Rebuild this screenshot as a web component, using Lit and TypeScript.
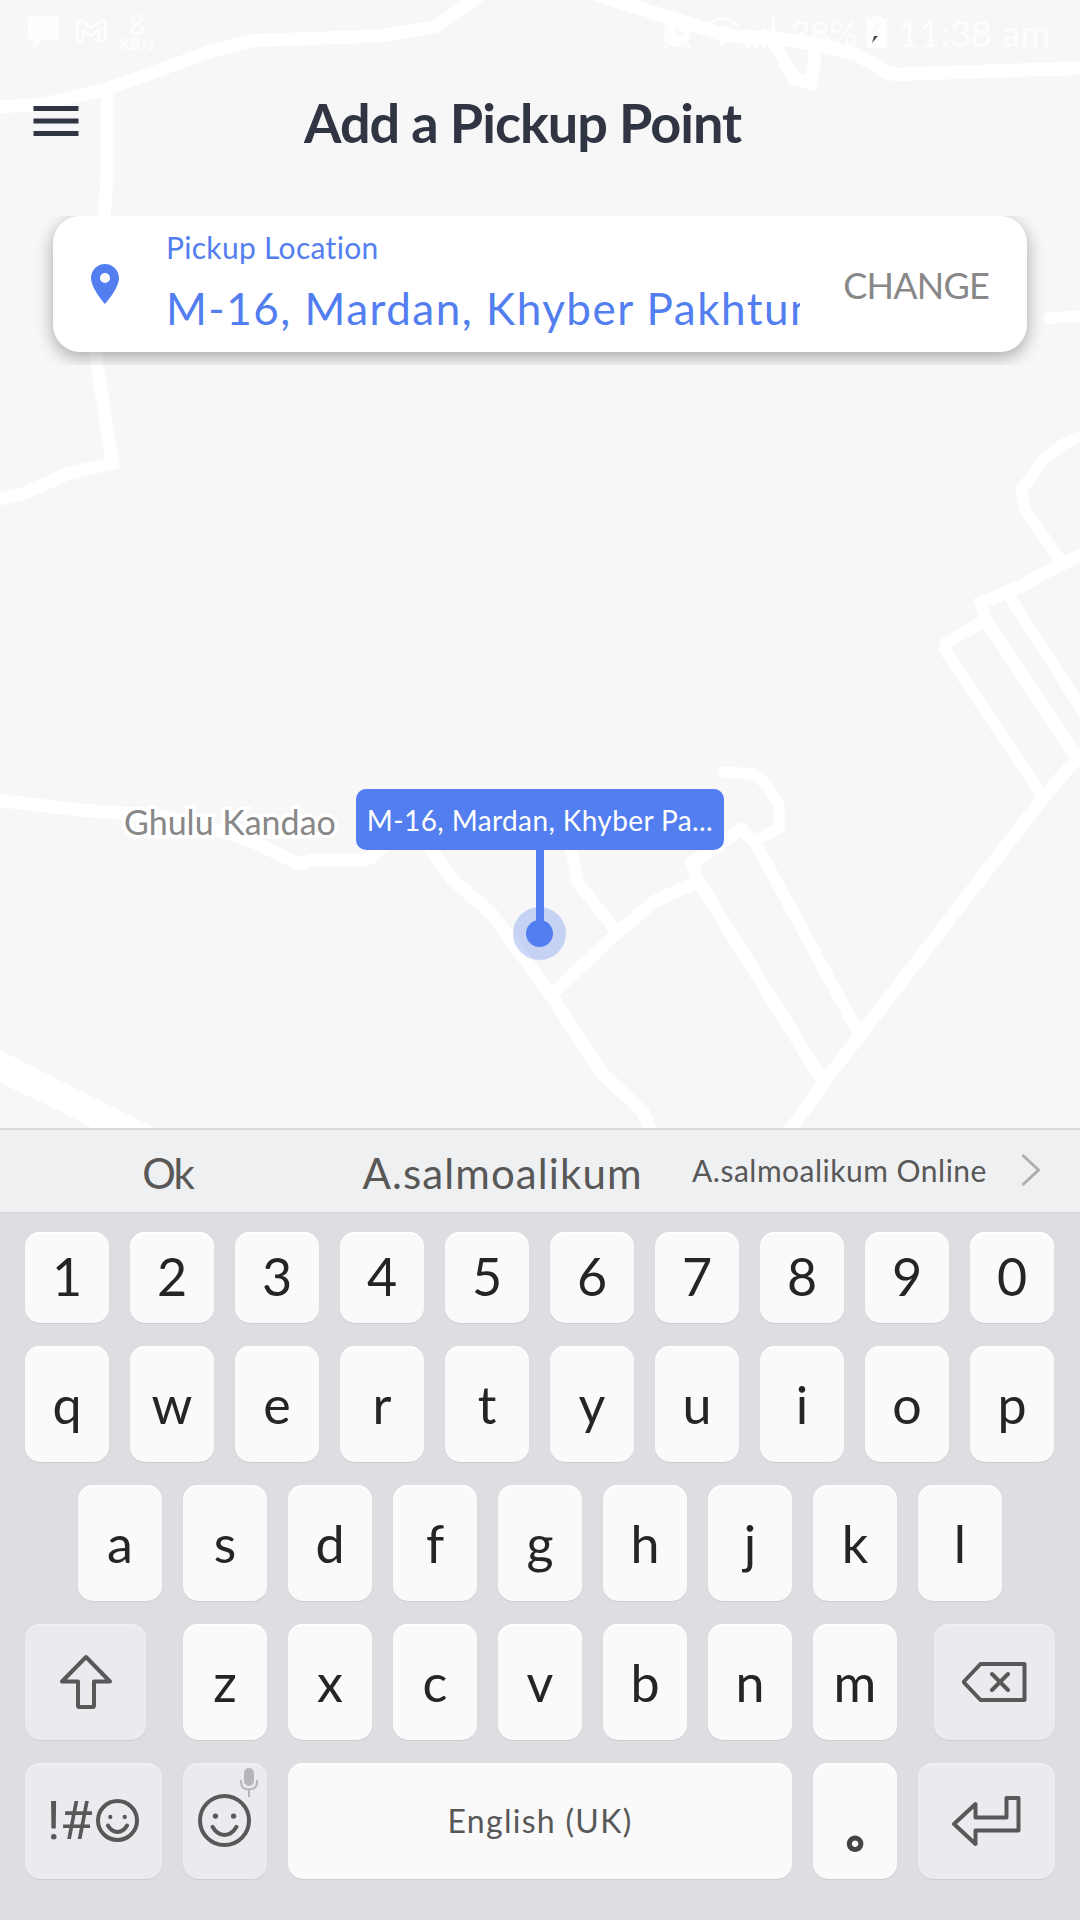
import { LitElement, html, css, svg } from "lit";
import { customElement, property } from "lit/decorators.js";

const ROADS: Array<[number, string]> = [
  [13, "M-5 107 L41 104.5 L107 89 L212 51 L253 40.5 L380 36 L437 26 L484 -8"],
  [13, "M107 89 V180 L104 217 L96 310 L95 352 L112.500 463 L67 474 L22.500 494 L-5 500"],
  [13.500, "M588 -8 L728 36 L774 38 L815 44 L858 55 L886 72 L895 74.500 L1085 68"],
  [13, "M774 42 L794 79 L811 83 L816 46"],
  [11.500, "M1049 318 L1085 316"],
  [11.500, "M1085 435 L1065 443 L1046 457 L1021 490 L1026 511 L1061 561"],
  [13, "M1085 554 L1062 564 L1019 587 L981 603 L986 620 L1075 755"],
  [12, "M984 621 L946 643 L945 650 L1043 797"],
  [11.500, "M1010 597 L1084 713"],
  [13, "M1086 748 L1043 798 L824 1082 L786 1136"],
  [11.500, "M724 772 L754 774 L767 785 L779 806 V828 L754 841"],
  [13, "M741 829 L692 863 L697 879 L824 1083"],
  [12, "M741 829 L755 842 L859 1034"],
  [13, "M697 882 L655 901 L618 932 L553 993"],
  [12, "M565 835 L572 853 L578 883 L617 932"],
  [13, "M410 820 L430 848 L454 881 L491 913 L553 998 L602 1073 L643 1112 L653 1138"],
  [13, "M-5 800 L80 810 L160 816 L210 828 L252 841 L299 864 L312 860 H362 L372 857 L400 830"],
];

@customElement("map-roads")
export class MapRoads extends LitElement {
  static styles = css`
    :host { display: block; }
    .roads { display: block; fill: none; stroke: #fff; stroke-linecap: round; stroke-linejoin: miter; }
    .highway { fill: #fff; stroke: none; }
  `;
  render() {
    return html`<svg class="roads" width="1080" height="1128" viewBox="0 0 1080 1128">
      ${ROADS.map(([w, d]) => svg`<path stroke-width=${w} d=${d}></path>`)}
      <path class="highway" d="M0 1050 L119 1110 L155 1128 H92 L58 1110 L0 1083 Z" />
    </svg>`;
  }
}

@customElement("status-bar")
export class StatusBar extends LitElement {
  static styles = css`
    :host {
      display: flex; justify-content: space-between; height: 62px; padding: 12px 31px 0 28px;
      box-sizing: border-box; color: rgba(255, 255, 255, 0.8);
    }
    .group { display: flex; align-items: flex-start; }
    .chat { margin-top: 4px; }
    .mail { margin: 7px 12px 0 15px; }
    .rate { display: flex; flex-direction: column; align-items: center; font: 700 16px/15px "Open Sans", sans-serif; }
    .num { font-size: 28px; line-height: 25px; font-weight: 600; }
    .alarm { margin: 6px 12px 0 0; }
    .wifi { margin: 5px 5px 0 0; }
    .signal { margin: 5px 14px 0 0; }
    .txt { font: 400 36px/42px Lato, sans-serif; white-space: nowrap; }
    .pct { width: 69px; letter-spacing: -1.3px; }
    .batt { margin: 4px 11px 0 7px; }
    .time { width: 151px; letter-spacing: 0.4px; }
  `;
  render() {
    return html`
      <div class="group">
        <svg class="chat" width="32" height="33" fill="currentColor"><path d="M2 0H29Q31 0 31 2V22Q31 24 29 24H14L5 33V24H2Q0 24 0 22V2Q0 0 2 0Z" /></svg>
        <svg class="mail" width="32" height="25" fill="none" stroke="currentColor" stroke-width="2.500" stroke-linejoin="round">
          <path d="M2 4Q4 0 7 2L16 9L25 2Q29 0 30 4V20Q30 22 28 22H24V11L16 17L8 11V22H4Q2 22 2 20Z" />
        </svg>
        <div class="rate"><span class="num">8</span><span>KB/s</span></div>
      </div>
      <div class="group">
        <svg class="alarm" width="30" height="32" fill="none" stroke="currentColor" stroke-width="3">
          <path fill="currentColor" stroke="none" fill-rule="evenodd" d="M15 2A13.500 13.500 0 1 0 15 29A13.500 13.500 0 1 0 15 2ZM13.500 7H16.500V14H22V17H13.500Z" />
          <path d="M6 26L2 30M24 26L28 30M2 7L7 2M23 2L28 7" />
        </svg>
        <svg class="wifi" width="36" height="30" fill="none" stroke="currentColor" stroke-width="3">
          <path d="M2 9Q18 -6 34 9M8 15Q18 5 28 15M13 21Q18 16 23 21" /><circle cx="18" cy="26" r="2.500" fill="currentColor" stroke="none" />
        </svg>
        <svg class="signal" width="31" height="31" fill="currentColor"><path d="M0 27h5v4H0zM9 21h4v10H9zM18 11h3v20h-3zM27 0h3v31h-3z" /></svg>
        <span class="txt pct">38%</span>
        <svg class="batt" width="21" height="32" viewBox="0 0 21 32">
          <path fill="currentColor" d="M6 0h9v3h6v29H0V3h6z" />
          <path fill="#f9f9f9" d="M11 7L4 18H9L6 27L17 15H11L15 7Z" />
          <path fill="#4a4a4a" d="M8 20H12L6 27Z" />
        </svg>
        <span class="txt time">11:38 am</span>
      </div>`;
  }
}

@customElement("pickup-card")
export class PickupCard extends LitElement {
  static styles = css`
    :host {
      display: flex; height: 136px; margin: 0 53px; box-sizing: border-box; padding: 0 38px 0 28px;
      border-radius: 27px; background: #fff; font-family: Lato, sans-serif;
      box-shadow: 0 5px 17px rgba(0, 0, 0, 0.33); clip-path: inset(0 -40px -13px -40px);
    }
    .pin { flex: none; align-self: center; margin-top: -1px; fill: #527ef0; }
    .body { width: 634px; margin-left: 37px; padding-top: 13px; overflow: hidden; color: #527ef0; white-space: nowrap; }
    .label { font-size: 30px; line-height: 36px; letter-spacing: 0.3px; }
    .value { font-size: 44px; line-height: 52px; margin-top: 17px; letter-spacing: 1.5px; }
    .change { margin-left: auto; align-self: center; font-size: 36px; line-height: 44px; letter-spacing: -0.8px; margin-top: 2px; color: #888; }
  `;
  render() {
    return html`
      <svg class="pin" width="48" height="48" viewBox="0 0 24 24"><path d="M12 2C8.130 2 5 5.130 5 9c0 5.250 7 13 7 13s7-7.750 7-13c0-3.870-3.130-7-7-7zm0 9.500a2.500 2.500 0 1 1 0-5 2.500 2.500 0 0 1 0 5z" /></svg>
      <div class="body">
        <div class="label">Pickup Location</div>
        <div class="value">M-16, Mardan, Khyber Pakhtun</div>
      </div>
      <div class="change">CHANGE</div>`;
  }
}

const smile = (r: number, w: number) => svg`
  <g transform="translate(${r + w / 2} ${r + w / 2})" fill="none" stroke="#585858" stroke-width=${w} stroke-linecap="round">
    <circle r=${r}></circle>
    <path d="M${-r * 0.49} ${r * 0.26}Q${-r * 0.3} ${r * 0.59} 0 ${r * 0.59}T${r * 0.49} ${r * 0.26}"></path>
    <circle cx=${-r * 0.37} cy=${-r * 0.18} r=${r * 0.11} fill="#585858" stroke="none"></circle>
    <circle cx=${r * 0.37} cy=${-r * 0.18} r=${r * 0.11} fill="#585858" stroke="none"></circle>
  </g>`;

@customElement("key-cap")
export class KeyCap extends LitElement {
  @property() label = "";
  static styles = css`
    :host {
      display: flex; align-items: center; justify-content: center; position: relative;
      box-sizing: border-box; width: 84px; height: 100%; border-radius: 15px; background: #fafafa;
      box-shadow: inset 0 2px 1px #fff, 0 1px 1px rgba(0, 0, 0, 0.08);
      font: 400 52px/62px Lato, sans-serif; color: #252525;
    }
    :host([fn]) { background: #e9ebef; box-shadow: inset 0 2px 1px #eff0f3, 0 1px 1px rgba(0, 0, 0, 0.08); color: #585858; }
    :host([wide]) { width: 121px; }
    :host([wider]) { width: 137px; }
    :host([space]) { width: 504px; font-size: 32px; line-height: 38px; color: #585858; }
  `;
  render() {
    return html`<slot>${this.label}</slot>`;
  }
}

@customElement("soft-keyboard")
export class SoftKeyboard extends LitElement {
  static styles = css`
    :host { display: block; }
    .suggest {
      display: grid; grid-template-columns: 335px 335px 339px 71px; align-items: center; height: 82px;
      background: #eff0f2; border-top: 2px solid #d9dadb;
      font: 400 42px/50px Lato, sans-serif; color: #585858; text-align: center; white-space: nowrap;
    }
    .first { letter-spacing: -2px; padding-top: 3px; }
    .mid { letter-spacing: 1.1px; padding-top: 3px; }
    .small { font-size: 30px; letter-spacing: 0.5px; padding-bottom: 3px; }
    .more { padding-left: 12px; display: block; margin-bottom: 3px; }
    .keys {
      display: grid; grid-template-rows: 91px 116px 116px 116px 116px; row-gap: 23px;
      height: 708px; box-sizing: border-box; padding: 19px 25px 0; background: #dddee2; border-top: 1px solid #d6d8d8;
    }
    .row { display: flex; gap: 21px; }
    .home { padding-left: 53px; }
    .shift { margin-right: 16px; }
    .back { margin-left: 16px; }
    .up { padding-bottom: 3px; }
    .sym { font: 400 53px/62px Roboto, sans-serif; letter-spacing: -0.5px; margin-right: 4px; }
    .mic { position: absolute; right: 9px; top: 5px; }
    .space-label { letter-spacing: 1.3px; }
    .dot { font-size: 92px; padding-bottom: 14px; color: #fafafa; -webkit-text-stroke: 5px #444; }
    .icon { fill: none; stroke: #585858; stroke-width: 4; stroke-linejoin: round; stroke-linecap: round; }
  `;
  private keys(s: string, cls = "") {
    return s.split("").map((k) => html`<key-cap><span class=${cls}>${k}</span></key-cap>`);
  }
  render() {
    return html`
      <div class="suggest">
        <span class="first">Ok</span><span class="mid">A.salmoalikum</span><span class="small">A.salmoalikum Online</span>
        <svg class="more" width="20" height="34" fill="none" stroke="#adaeb0" stroke-width="3"><path d="M1.500 2L17.500 17L1.500 32" /></svg>
      </div>
      <div class="keys">
        <div class="row">${this.keys("1234567890", "up")}</div>
        <div class="row">${this.keys("qwertyuiop")}</div>
        <div class="row home">${this.keys("asdfghjkl")}</div>
        <div class="row">
          <key-cap fn wide class="shift"><svg class="icon" width="54" height="56"><path d="M27 3L3 27.500H19V51.500Q19 53 20.500 53H33.500Q35 53 35 51.500V27.500H51Z" /></svg></key-cap>
          ${this.keys("zxcvbnm")}
          <key-cap fn wide class="back"><svg class="icon" width="66" height="42"><path d="M1.500 21L18.500 3H62.500V39H18.500ZM30 13L46 29M46 13L30 29" /></svg></key-cap>
        </div>
        <div class="row">
          <key-cap fn wider><span class="sym">!#</span><svg width="44" height="44">${smile(19.5, 4)}</svg></key-cap>
          <key-cap fn>
            <svg width="54" height="54">${smile(24.5, 4)}</svg>
            <svg class="mic" width="18" height="29" fill="none" stroke="#b5b6b8" stroke-width="2"><rect x="4" y="0" width="10" height="18" rx="5" fill="#b5b6b8" stroke="none" /><path d="M1 12V14Q1 21.500 9 21.500T17 14V12M9 21V29" /></svg>
          </key-cap>
          <key-cap space><span class="space-label">English (UK)</span></key-cap>
          <key-cap><span class="dot">.</span></key-cap>
          <key-cap fn wider><svg class="icon" width="70" height="52"><path d="M2 29L23.500 9V22.500H54.500V3H66.500V35.500H23.500V49Z" /></svg></key-cap>
        </div>
      </div>`;
  }
}

@customElement("app-root")
export class AppRoot extends LitElement {
  static styles = css`
    :host { display: flex; flex-direction: column; width: 1080px; height: 1920px; overflow: hidden; font-family: Lato, sans-serif; }
    .map { position: relative; height: 1128px; background: #f7f7f7; overflow: hidden; }
    .roads { position: absolute; inset: 0; }
    .content { position: relative; }
    .bar { display: grid; grid-template-columns: 304px 1fr; height: 154px; }
    .menu { margin: 44px 0 0 33px; }
    .title { margin: 28px 0 0; font-size: 54px; line-height: 65px; font-weight: 700; color: #313443; letter-spacing: -1px; white-space: nowrap; }
    .place {
      position: absolute; left: 124px; top: 801px; font-size: 34px; line-height: 41px; color: #888; white-space: nowrap;
      -webkit-text-stroke: 7px #fff; paint-order: stroke fill; stroke-linejoin: round;
    }
    .marker { position: absolute; left: 356px; top: 789px; width: 368px; display: flex; flex-direction: column; align-items: center; }
    .tip {
      width: 100%; height: 61px; box-sizing: border-box; border-radius: 10px;
      background: #527ef0; color: #fff; font-size: 28px; line-height: 63px; letter-spacing: 0.4px; white-space: nowrap; text-align: center;
    }
    .stem { display: block; }
  `;
  render() {
    return html`
      <main class="map">
        <map-roads class="roads"></map-roads>
        <div class="content">
          <status-bar></status-bar>
          <div class="bar">
            <svg class="menu" width="46" height="30" fill="#313443"><path d="M0.500 0h45v5H0.500zM0.500 12.500h45v5H0.500zM0.500 25h45v5H0.500z" /></svg>
            <h1 class="title">Add a Pickup Point</h1>
          </div>
          <pickup-card></pickup-card>
        </div>
        <span class="place">Ghulu Kandao</span>
        <div class="marker">
          <div class="tip">M-16, Mardan, Khyber Pa...</div>
          <svg class="stem" width="54" height="112" fill="#527ef0">
            <circle cx="26.500" cy="83.500" r="26.500" fill-opacity="0.300" /><circle cx="26.500" cy="83.500" r="13.500" /><rect x="23" y="0" width="8" height="76" />
          </svg>
        </div>
      </main>
      <soft-keyboard></soft-keyboard>`;
  }
}
